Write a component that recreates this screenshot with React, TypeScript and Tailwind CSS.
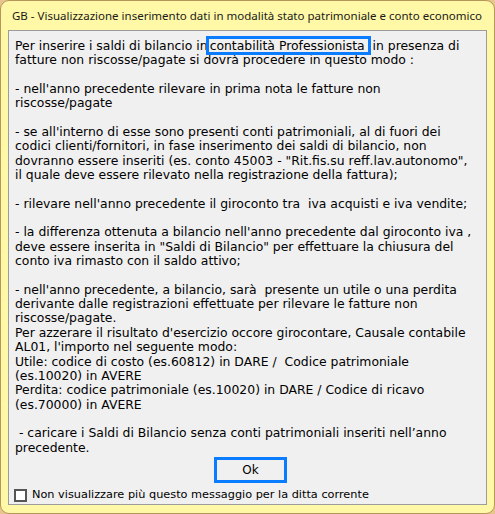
import React from "react";

const lines: string[] = [
  "__FIRST__",
  "fatture non riscosse/pagate si dovrà procedere in questo modo :",
  "",
  "- nell'anno precedente rilevare in prima nota le fatture non",
  "riscosse/pagate",
  "",
  "- se all'interno di esse sono presenti conti patrimoniali, al di fuori dei",
  "codici clienti/fornitori, in fase inserimento dei saldi di bilancio, non",
  "dovranno essere inseriti (es. conto 45003 - \"Rit.fis.su reff.lav.autonomo\",",
  "il quale deve essere rilevato nella registrazione della fattura);",
  "",
  "- rilevare nell'anno precedente il giroconto tra  iva acquisti e iva vendite;",
  "",
  "- la differenza ottenuta a bilancio nell'anno precedente dal giroconto iva ,",
  "deve essere inserita in \"Saldi di Bilancio\" per effettuare la chiusura del",
  "conto iva rimasto con il saldo attivo;",
  "",
  "- nell'anno precedente, a bilancio, sarà  presente un utile o una perdita",
  "derivante dalle registrazioni effettuate per rilevare le fatture non",
  "riscosse/pagate.",
  "Per azzerare il risultato d'esercizio occore girocontare, Causale contabile",
  "AL01, l'importo nel seguente modo:",
  "Utile: codice di costo (es.60812) in DARE /  Codice patrimoniale",
  "(es.10020) in AVERE",
  "Perdita: codice patrimoniale (es.10020) in DARE / Codice di ricavo",
  "(es.70000) in AVERE",
  "",
  " - caricare i Saldi di Bilancio senza conti patrimoniali inseriti nell’anno",
  "precedente.",
];

const App = () => {
  return (
    <div className="w-[495px] h-[514px] bg-[#e9c48f] font-['DejaVu_Sans',sans-serif] text-black">
      <div className="w-[495px] h-[514px] rounded-[9px] border border-[#b7965a] bg-[#fff8a6] flex flex-col px-[7px] pb-[8px]">
        {/* Title bar */}
        <div className="h-[32px] flex items-center pl-[4px] pt-[1px] text-[11.5px] font-['Noto_Sans',sans-serif] text-[#1a1a1a] whitespace-nowrap">
          GB - Visualizzazione inserimento dati in modalità stato patrimoniale e conto economico
        </div>
        {/* Panel */}
        <div className="flex-1 border border-[#9c9c9c] bg-[#f0f0f0] flex flex-col pt-[8px] pl-[6px]">
          <div className="text-[12.4px] leading-[14.36px] whitespace-pre">
            {lines.map((l, i) =>
              l === "__FIRST__" ? (
                <div key={i}>
                  Per inserire i saldi di bilancio in
                  <span className="outline outline-[3px] outline-[#0a7cff] -outline-offset-[1px] pl-[2px]">contabilità Professionista </span>
                  {" "}in presenza di
                </div>
              ) : (
                <div key={i} className="h-[14.36px]">{l}</div>
              )
            )}
          </div>
          <div className="flex justify-center mt-[2px]">
            <button className="w-[73px] h-[26px] border-[3px] border-[#0a7cff] bg-[#f0f0f0] text-[12px] flex items-center justify-center">
              Ok
            </button>
          </div>
          <label className="flex items-center gap-[5px] mt-[4px] -ml-[1px] text-[11.3px]">
            <span className="w-[13px] h-[13px] border-2 border-[#555] bg-white" />
            Non visualizzare più questo messaggio per la ditta corrente
          </label>
        </div>
      </div>
    </div>
  );
};

export default App;
